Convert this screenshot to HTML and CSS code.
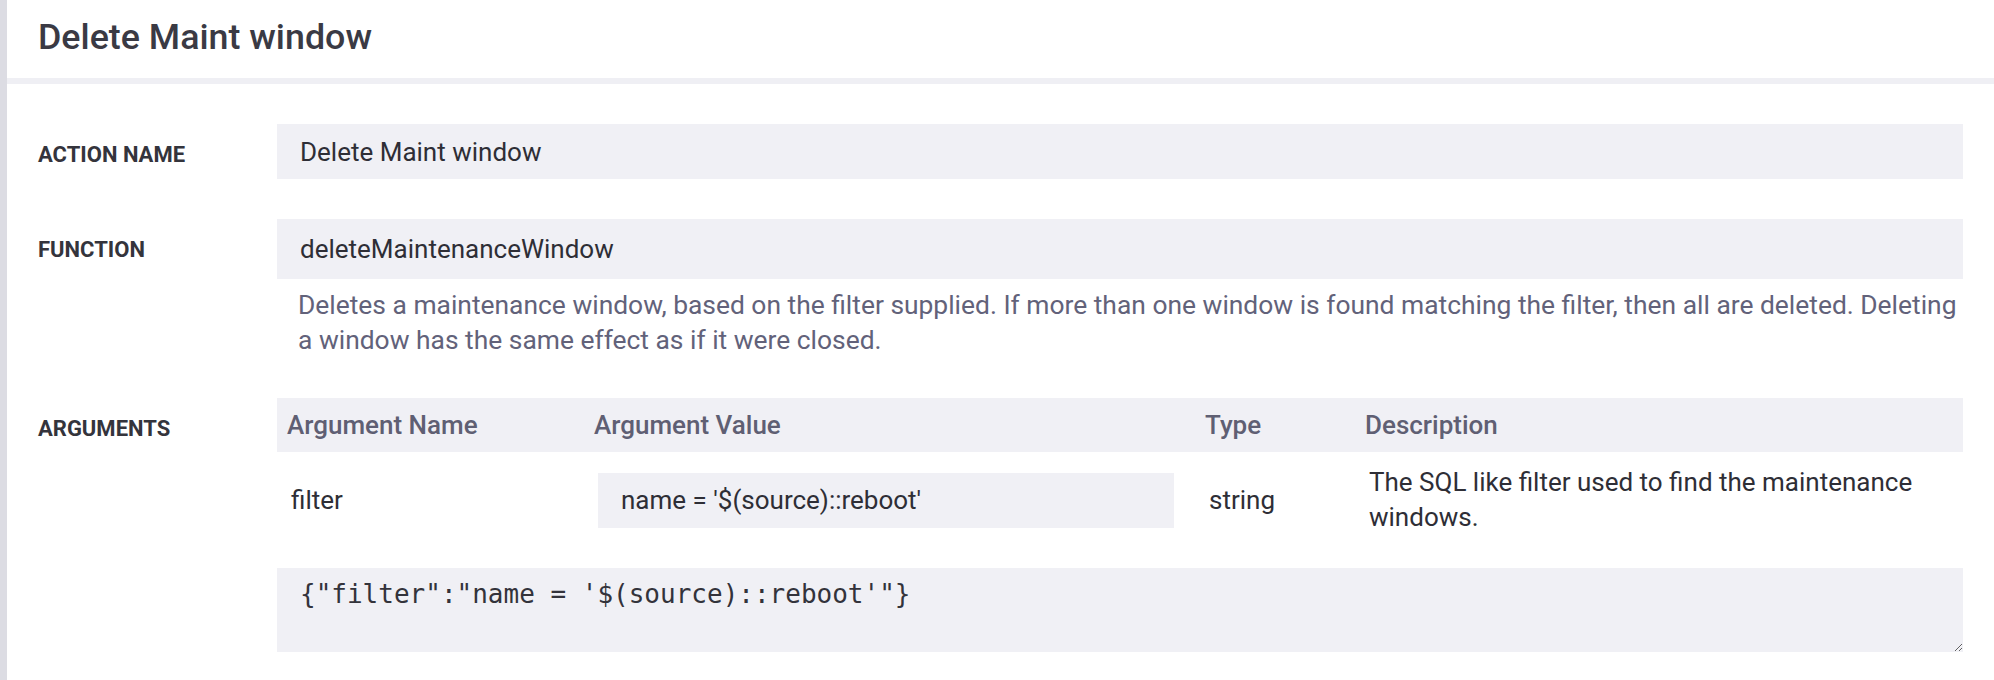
FILE: index.html
```html
<!DOCTYPE html>
<html lang="en">
<head>
    <meta charset="UTF-8">
    <meta name="viewport" content="width=device-width, initial-scale=1.0">
    <link rel="stylesheet" href="styles.css">
    <title>Delete Maint window</title>
</head>
<body>
    <div class="panel">
        <header class="panel-head">
            <h1>Delete Maint window</h1>
        </header>

        <div class="panel-body">
            <div class="field-row">
                <label class="field-label" for="actionName">Action Name</label>
                <div class="field">
                    <input class="text-box" id="actionName" type="text" value="Delete Maint window" readonly>
                </div>
            </div>

            <div class="field-row">
                <label class="field-label" for="functionName">Function</label>
                <div class="field">
                    <input class="text-box function-box" id="functionName" type="text" value="deleteMaintenanceWindow" readonly>
                    <p class="field-help">Deletes a maintenance window, based on the filter supplied. If more than one window is found matching the filter, then all are deleted. Deleting a window has the same effect as if it were closed.</p>
                </div>
            </div>

            <div class="field-row">
                <label class="field-label">Arguments</label>
                <div class="field">
                    <div class="args-table">
                        <div class="args-head">
                            <div class="args-cell">Argument Name</div>
                            <div class="args-cell">Argument Value</div>
                            <div class="args-cell">Type</div>
                            <div class="args-cell">Description</div>
                        </div>
                        <div class="args-row">
                            <div class="args-cell">filter</div>
                            <div class="args-cell value-cell">
                                <input class="text-box" type="text" value="name = '$(source)::reboot'" readonly>
                            </div>
                            <div class="args-cell">string</div>
                            <div class="args-cell">The SQL like filter used to find the maintenance windows.</div>
                        </div>
                    </div>
                    <textarea class="args-json" readonly>{"filter":"name = '$(source)::reboot'"}</textarea>
                </div>
            </div>
        </div>
    </div>
</body>
</html>
```

FILE: styles.css
```css
body {
    margin: 0;
    padding: 0;
    font-family: Roboto, "Liberation Sans", sans-serif;
    background-color: #fff;
    color: #2e2e36;
}

.panel {
    border-left: 7px solid #dcdce3;
    min-height: 680px;
    box-sizing: border-box;
}

.panel-head {
    height: 84px;
    display: flex;
    align-items: center;
    padding: 0 31px 2px;
    box-sizing: border-box;
    border-bottom: 6px solid #efeff4;
}

.panel-head h1 {
    margin: 0;
    font-size: 35.8px;
    font-weight: 500;
    line-height: 1;
    color: #3a3a44;
}

.panel-body {
    padding: 40px 31px 0;
}

.field-row {
    display: grid;
    grid-template-columns: 239px 1fr;
    margin-bottom: 40px;
}

.field-label {
    font-size: 22px;
    font-weight: 700;
    text-transform: uppercase;
    color: #34343c;
    line-height: 33px;
    padding-top: 14px;
}

.text-box {
    display: block;
    width: 100%;
    height: 55px;
    box-sizing: border-box;
    border: none;
    outline: none;
    padding: 0 23px;
    background-color: #f0f0f5;
    font-family: inherit;
    font-size: 26px;
    color: #2e2e36;
}

.function-box {
    height: 60px;
}

.field-help {
    margin: 9px 0 0;
    padding-left: 21px;
    font-size: 26.4px;
    line-height: 35px;
    color: #62627a;
}

.args-head,
.args-row {
    display: grid;
    grid-template-columns: 307px 611px 160px 1fr;
}

.args-head {
    background-color: #f0f0f5;
    height: 54px;
    align-items: center;
}

.args-head .args-cell {
    padding-left: 10px;
    font-size: 26px;
    font-weight: 500;
    color: #5f5f73;
}

.args-row {
    align-items: center;
    padding: 13px 0;
}

.args-row .args-cell {
    padding-left: 14px;
    font-size: 26px;
    line-height: 35px;
    color: #2e2e36;
}

.args-row .value-cell {
    padding-right: 21px;
}

.args-json {
    display: block;
    width: 100%;
    height: 84px;
    margin-top: 20px;
    box-sizing: border-box;
    border: none;
    outline: none;
    padding: 10px 23px;
    background-color: #f0f0f5;
    font-family: "DejaVu Sans Mono", monospace;
    font-size: 26px;
    line-height: 1.3;
    color: #33333b;
    resize: vertical;
}
```
